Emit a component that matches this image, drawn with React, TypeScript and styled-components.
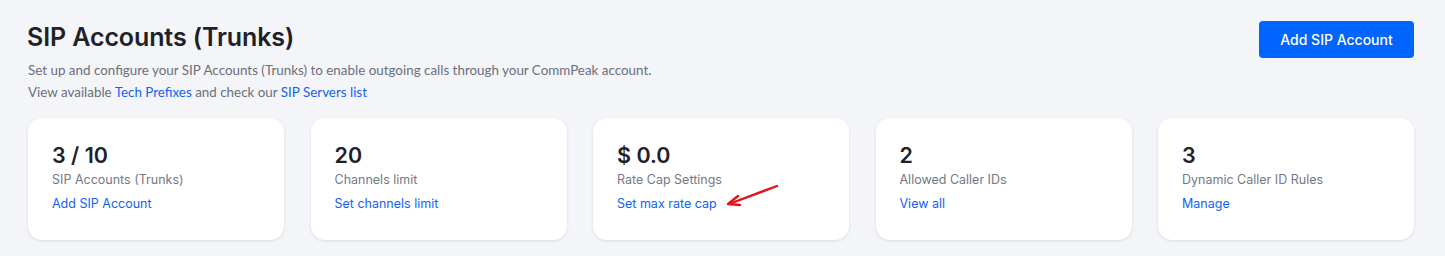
import React from "react";
import styled, { createGlobalStyle } from "styled-components";

const Global = createGlobalStyle`
  html, body { margin: 0; padding: 0; background: #f4f5f9; }
  body { font-family: Inter, "Noto Sans", sans-serif; }
`;

const Page = styled.div`
  padding: 20px 31px 16px 28px;
  box-sizing: border-box;
  width: 1445px;
`;

const Header = styled.div`
  display: flex;
  justify-content: space-between;
  align-items: flex-start;
`;

const TitleBlock = styled.div`
  display: flex;
  flex-direction: column;
`;

const Title = styled.h1`
  margin: 0;
  font-family: Inter, sans-serif;
  font-weight: 600;
  font-size: 25px;
  line-height: 34px;
  color: #1f2129;
  letter-spacing: -0.1px;
  margin-left: -1px;
`;

const Desc = styled.p`
  margin: 0;
  font-family: Lato, "Noto Sans", sans-serif;
  font-size: 13.4px;
  line-height: 22px;
  color: #6b6f7b;
  &:first-of-type { margin-top: 5px; }
`;

const Link = styled.a`
  color: #1261f5;
  text-decoration: none;
`;

const PrimaryButton = styled.button`
  margin-top: 1px;
  width: 155px;
  height: 37px;
  border: none;
  border-radius: 4px;
  background: #0064fd;
  color: #fff;
  font-family: Inter, sans-serif;
  font-size: 14px;
  font-weight: 500;
  cursor: pointer;
`;

const Grid = styled.div`
  margin-top: 15px;
  display: grid;
  grid-template-columns: repeat(5, 1fr);
  column-gap: 26.5px;
`;

const Card = styled.div`
  position: relative;
  height: 122px;
  background: #fff;
  border-radius: 14px;
  box-shadow: 0 1px 3px rgba(30, 40, 70, 0.12);
  padding: 23px 24px 0 24px;
  box-sizing: border-box;
  display: flex;
  flex-direction: column;
`;

const Value = styled.div`
  font-family: Inter, sans-serif;
  font-weight: 600;
  font-size: 21.5px;
  line-height: 28px;
  color: #1f2129;
`;

const Label = styled.div`
  font-family: Inter, sans-serif;
  font-size: 12.5px;
  line-height: 18px;
  color: #747885;
  margin-top: 2px;
`;

const CardLink = styled.a`
  font-family: Inter, sans-serif;
  font-size: 12.5px;
  line-height: 18px;
  color: #1261f5;
  text-decoration: none;
  margin-top: 6px;
  align-self: flex-start;
`;

const Arrow = styled.svg`
  position: absolute;
  left: 132px;
  top: 66px;
  width: 56px;
  height: 26px;
  overflow: visible;
`;

const stats = [
  { value: "3 / 10", label: "SIP Accounts (Trunks)", link: "Add SIP Account" },
  { value: "20", label: "Channels limit", link: "Set channels limit" },
  { value: "$ 0.0", label: "Rate Cap Settings", link: "Set max rate cap", arrow: true },
  { value: "2", label: "Allowed Caller IDs", link: "View all" },
  { value: "3", label: "Dynamic Caller ID Rules", link: "Manage" },
];

export default function App() {
  return (
    <>
      <Global />
      <Page>
        <Header>
          <TitleBlock>
            <Title>SIP Accounts (Trunks)</Title>
            <Desc>Set up and configure your SIP Accounts (Trunks) to enable outgoing calls through your CommPeak account.</Desc>
            <Desc>
              View available <Link href="#">Tech Prefixes</Link> and check our <Link href="#">SIP Servers list</Link>
            </Desc>
          </TitleBlock>
          <PrimaryButton>Add SIP Account</PrimaryButton>
        </Header>
        <Grid>
          {stats.map((s) => (
            <Card key={s.label}>
              <Value>{s.value}</Value>
              <Label>{s.label}</Label>
              <CardLink href="#">{s.link}</CardLink>
              {s.arrow && (
                <Arrow viewBox="0 0 56 26">
                  <g stroke="#e3131b" strokeWidth="2.4" strokeLinecap="round" strokeLinejoin="round" fill="none">
                    <line x1="52" y1="2" x2="4" y2="20" />
                    <polyline points="13,12 3,20 15,21" />
                  </g>
                </Arrow>
              )}
            </Card>
          ))}
        </Grid>
      </Page>
    </>
  );
}
